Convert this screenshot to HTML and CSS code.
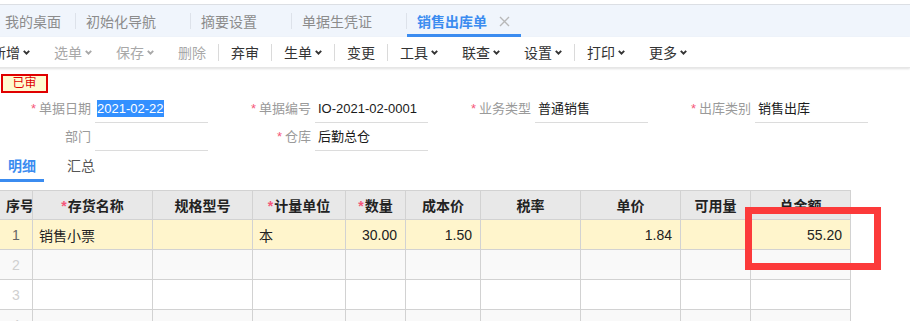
FILE: index.html
```html
<!DOCTYPE html>
<html lang="zh-CN">
<head>
    <meta charset="UTF-8">
    <meta name="viewport" content="width=device-width, initial-scale=1.0">
    <title>销售出库单</title>
    <link rel="stylesheet" href="styles.css">
</head>
<body>
    <div class="tabbar">
        <div class="tab tab-home">我的桌面</div>
        <span class="tab-sep"></span>
        <div class="tab">初始化导航<span class="close"><svg width="11" height="11" viewBox="0 0 11 11"><path d="M1 1L10 10M10 1L1 10"/></svg></span></div>
        <span class="tab-sep"></span>
        <div class="tab">摘要设置<span class="close"><svg width="11" height="11" viewBox="0 0 11 11"><path d="M1 1L10 10M10 1L1 10"/></svg></span></div>
        <span class="tab-sep"></span>
        <div class="tab">单据生凭证<span class="close"><svg width="11" height="11" viewBox="0 0 11 11"><path d="M1 1L10 10M10 1L1 10"/></svg></span></div>
        <span class="tab-sep"></span>
        <div class="tab active">销售出库单<span class="close"><svg width="11" height="11" viewBox="0 0 11 11"><path d="M1 1L10 10M10 1L1 10"/></svg></span></div>
    </div>

    <div class="toolbar">
        <span class="tool first">新增<svg class="caret" width="7" height="5" viewBox="0 0 7 5"><path d="M0.8 0.8L3.5 3.6L6.2 0.8"/></svg></span>
        <span class="tool disabled">选单<svg class="caret" width="7" height="5" viewBox="0 0 7 5"><path d="M0.8 0.8L3.5 3.6L6.2 0.8"/></svg></span>
        <span class="tool disabled">保存<svg class="caret" width="7" height="5" viewBox="0 0 7 5"><path d="M0.8 0.8L3.5 3.6L6.2 0.8"/></svg></span>
        <span class="tool disabled">删除</span>
        <span class="tool-sep"></span>
        <span class="tool">弃审</span>
        <span class="tool-sep"></span>
        <span class="tool">生单<svg class="caret" width="7" height="5" viewBox="0 0 7 5"><path d="M0.8 0.8L3.5 3.6L6.2 0.8"/></svg></span>
        <span class="tool-sep"></span>
        <span class="tool">变更</span>
        <span class="tool-sep"></span>
        <span class="tool">工具<svg class="caret" width="7" height="5" viewBox="0 0 7 5"><path d="M0.8 0.8L3.5 3.6L6.2 0.8"/></svg></span>
        <span class="tool">联查<svg class="caret" width="7" height="5" viewBox="0 0 7 5"><path d="M0.8 0.8L3.5 3.6L6.2 0.8"/></svg></span>
        <span class="tool">设置<svg class="caret" width="7" height="5" viewBox="0 0 7 5"><path d="M0.8 0.8L3.5 3.6L6.2 0.8"/></svg></span>
        <span class="tool-sep"></span>
        <span class="tool">打印<svg class="caret" width="7" height="5" viewBox="0 0 7 5"><path d="M0.8 0.8L3.5 3.6L6.2 0.8"/></svg></span>
        <span class="tool">更多<svg class="caret" width="7" height="5" viewBox="0 0 7 5"><path d="M0.8 0.8L3.5 3.6L6.2 0.8"/></svg></span>
    </div>

    <div class="badge">已审</div>

    <div class="form">
        <div class="field">
            <label><span class="req">*</span>单据日期</label>
            <div class="input"><span class="selected">2021-02-22</span></div>
        </div>
        <div class="field">
            <label><span class="req">*</span>单据编号</label>
            <div class="input">IO-2021-02-0001</div>
        </div>
        <div class="field">
            <label><span class="req">*</span>业务类型</label>
            <div class="input">普通销售</div>
        </div>
        <div class="field">
            <label><span class="req">*</span>出库类别</label>
            <div class="input">销售出库</div>
        </div>
        <div class="field">
            <label>部门</label>
            <div class="input"></div>
        </div>
        <div class="field">
            <label><span class="req">*</span>仓库</label>
            <div class="input">后勤总仓</div>
        </div>
    </div>

    <div class="subtabs">
        <span class="subtab active">明细</span>
        <span class="subtab">汇总</span>
    </div>

    <div class="table-wrap">
        <table class="grid">
            <colgroup>
                <col style="width: 33px">
                <col style="width: 120px">
                <col style="width: 100px">
                <col style="width: 93px">
                <col style="width: 60px">
                <col style="width: 75px">
                <col style="width: 100px">
                <col style="width: 100px">
                <col style="width: 70px">
                <col style="width: 100px">
            </colgroup>
            <thead>
                <tr>
                    <th>序号</th>
                    <th><span class="req">*</span>存货名称</th>
                    <th>规格型号</th>
                    <th><span class="req">*</span>计量单位</th>
                    <th><span class="req">*</span>数量</th>
                    <th>成本价</th>
                    <th>税率</th>
                    <th>单价</th>
                    <th>可用量</th>
                    <th>总金额</th>
                </tr>
            </thead>
            <tbody>
                <tr class="current">
                    <td class="no">1</td>
                    <td>销售小票</td>
                    <td></td>
                    <td>本</td>
                    <td class="num">30.00</td>
                    <td class="num">1.50</td>
                    <td></td>
                    <td class="num">1.84</td>
                    <td></td>
                    <td class="num">55.20</td>
                </tr>
                <tr class="odd">
                    <td class="no">2</td>
                    <td></td><td></td><td></td><td></td><td></td><td></td><td></td><td></td><td></td>
                </tr>
                <tr>
                    <td class="no">3</td>
                    <td></td><td></td><td></td><td></td><td></td><td></td><td></td><td></td><td></td>
                </tr>
                <tr class="odd">
                    <td class="no">4</td>
                    <td></td><td></td><td></td><td></td><td></td><td></td><td></td><td></td><td></td>
                </tr>
            </tbody>
        </table>
        <div class="mark"></div>
    </div>
</body>
</html>
```

FILE: styles.css
```css
body {
    margin: 0;
    padding-top: 4px;
    background: #fff;
    font-family: "Liberation Sans", "Noto Sans CJK SC", sans-serif;
    font-size: 14px;
    color: #333;
    overflow: hidden;
}
.tabbar {
    display: flex;
    align-items: center;
    height: 32px;
    background: #f0f5fc;
    border-top: 1px solid #dcdfe4;
}
.tab {
    display: flex;
    align-items: center;
    height: 100%;
    box-sizing: border-box;
    padding: 0 11px 0 10px;
    color: #8c8c8c;
    white-space: nowrap;
}
.tab-home {
    padding: 0 14px 0 5px;
}
.tab .close {
    display: flex;
    margin-left: 12px;
    visibility: hidden;
}
.tab .close path {
    stroke: #b8b8b8;
    stroke-width: 1.4;
}
.tab.active {
    color: #3b8cf0;
    font-weight: bold;
    border-bottom: 3px solid #3b8cf0;
    padding-top: 3px;
}
.tab.active .close {
    visibility: visible;
}
.tab-sep {
    width: 1px;
    height: 16px;
    background: #dde2ea;
}
.toolbar {
    display: flex;
    align-items: center;
    height: 30px;
    margin-left: -20px;
    box-shadow: 0 1px 2px rgba(0, 0, 0, 0.12);
    border-bottom: 1px solid #e6e6e6;
}
.tool {
    display: flex;
    align-items: center;
    padding: 0 12px;
    color: #333;
    white-space: nowrap;
}
.tool.disabled {
    color: #a8a8a8;
}
.caret {
    margin-left: 3px;
}
.caret path {
    fill: none;
    stroke: #333;
    stroke-width: 1.9;
}
.disabled .caret path {
    stroke: #a8a8a8;
}
.tool-sep {
    width: 1px;
    height: 17px;
    background: #dadada;
}
.badge {
    width: 47px;
    height: 19px;
    box-sizing: border-box;
    margin: 6px 0 0 1px;
    border: 2px solid #e00000;
    background: #fffbd0;
    color: #e00000;
    font-size: 12px;
    line-height: 15px;
    text-align: center;
}
.form {
    display: grid;
    grid-template-columns: repeat(4, 220px);
    margin-top: 2px;
    font-size: 13px;
}
.field {
    display: flex;
    height: 28px;
}
.field label {
    width: 95px;
    box-sizing: border-box;
    padding-right: 4px;
    text-align: right;
    line-height: 28px;
    color: #9a9a9a;
}
.req {
    color: #f5577a;
    margin-right: 3px;
}
th .req {
    margin-right: 1px;
}
.input {
    width: 113px;
    box-sizing: border-box;
    padding-left: 3px;
    border-bottom: 1px solid #dcdcdc;
    line-height: 28px;
    color: #1a1a1a;
}
.selected {
    margin-left: -1px;
    padding: 1px 0;
    background: #3390ff;
    color: #fff;
}
.subtabs {
    display: flex;
    gap: 15px;
    height: 31px;
}
.subtab {
    width: 44px;
    box-sizing: border-box;
    text-align: center;
    line-height: 30px;
    color: #555;
}
.subtab.active {
    color: #3b8cf0;
    font-weight: bold;
    border-bottom: 3px solid #3b8cf0;
}
.table-wrap {
    position: relative;
    margin-top: 8px;
}
.grid {
    border-collapse: collapse;
    table-layout: fixed;
    width: 851px;
    margin-left: -1px;
}
.grid th,
.grid td {
    border: 1px solid #d2d2d2;
    padding: 0 6px;
    white-space: nowrap;
    overflow: hidden;
}
.grid th {
    height: 28px;
    background: #e8e8e8;
    font-weight: bold;
    color: #222;
    text-align: center;
}
.grid td {
    height: 29px;
    color: #222;
}
.grid td.num {
    text-align: right;
    padding-right: 8px;
}
.grid td.no {
    text-align: center;
    padding: 0;
    color: #d0d0d0;
}
.grid tr.current td {
    background: #fff5cc;
}
.grid tr.current td.no {
    color: #666;
}
.grid tr.odd td {
    background: #f9f9f9;
}
.mark {
    position: absolute;
    left: 745px;
    top: 17px;
    width: 136px;
    height: 63px;
    box-sizing: border-box;
    border: 7px solid #fc3a3a;
}
```
